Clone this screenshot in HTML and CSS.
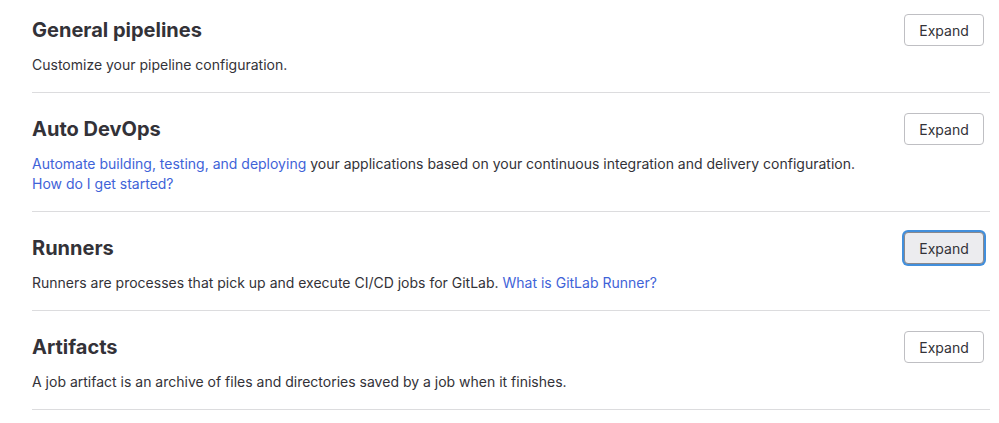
FILE: index.html
```html
<!DOCTYPE html>
<html lang="en">
<head>
<meta charset="utf-8">
<title>CI/CD Settings</title>
<link rel="stylesheet" href="styles.css">
</head>
<body>
<main class="page">
  <section class="settings">
    <div class="settings-header">
      <h4 class="settings-title">General pipelines</h4>
      <button class="btn" type="button">Expand</button>
    </div>
    <p class="settings-desc">Customize your pipeline configuration.</p>
  </section>
  <section class="settings">
    <div class="settings-header">
      <h4 class="settings-title">Auto DevOps</h4>
      <button class="btn" type="button">Expand</button>
    </div>
    <p class="settings-desc"><a href="#">Automate building, testing, and deploying</a> your applications based on your continuous integration and delivery configuration.<br><a href="#">How do I get started?</a></p>
  </section>
  <section class="settings">
    <div class="settings-header">
      <h4 class="settings-title">Runners</h4>
      <button class="btn btn-focus" type="button">Expand</button>
    </div>
    <p class="settings-desc">Runners are processes that pick up and execute CI/CD jobs for GitLab. <a href="#">What is GitLab Runner?</a></p>
  </section>
  <section class="settings">
    <div class="settings-header">
      <h4 class="settings-title">Artifacts</h4>
      <button class="btn" type="button">Expand</button>
    </div>
    <p class="settings-desc">A job artifact is an archive of files and directories saved by a job when it finishes.</p>
  </section>
</main>
</body>
</html>
```

FILE: styles.css
```css
* { box-sizing: border-box; }
html, body {
  margin: 0;
  padding: 0;
  background: #fff;
}
body {
  font-family: Inter, "Noto Sans", "Liberation Sans", sans-serif;
  color: #333238;
  font-size: 14px;
  line-height: 20px;
}
.page {
  width: 958px;
  margin-left: 32px;
}
.settings {
  padding: 20px 0 17px;
  border-bottom: 1px solid #dcdcde;
}
.settings:first-child {
  padding-top: 14px;
}
.settings-header {
  display: flex;
  align-items: center;
  justify-content: space-between;
  padding-right: 6px;
}
.settings-title {
  margin: 0;
  font-size: 20px;
  line-height: 24px;
  font-weight: 700;
  color: #333238;
}
.settings-desc {
  margin: 9px 0 0;
  font-size: 14px;
  line-height: 20px;
}
.settings-desc a {
  color: #3f63d8;
  text-decoration: none;
}
.btn {
  width: 80px;
  height: 32px;
  padding: 0;
  font-family: inherit;
  font-size: 14px;
  color: #333238;
  background: #fff;
  border: 1px solid #bfbfc3;
  border-radius: 4px;
}
.btn-focus {
  background: #ececef;
  border-color: #89888d;
  box-shadow: 0 0 0 2px #428fdc;
}
```
